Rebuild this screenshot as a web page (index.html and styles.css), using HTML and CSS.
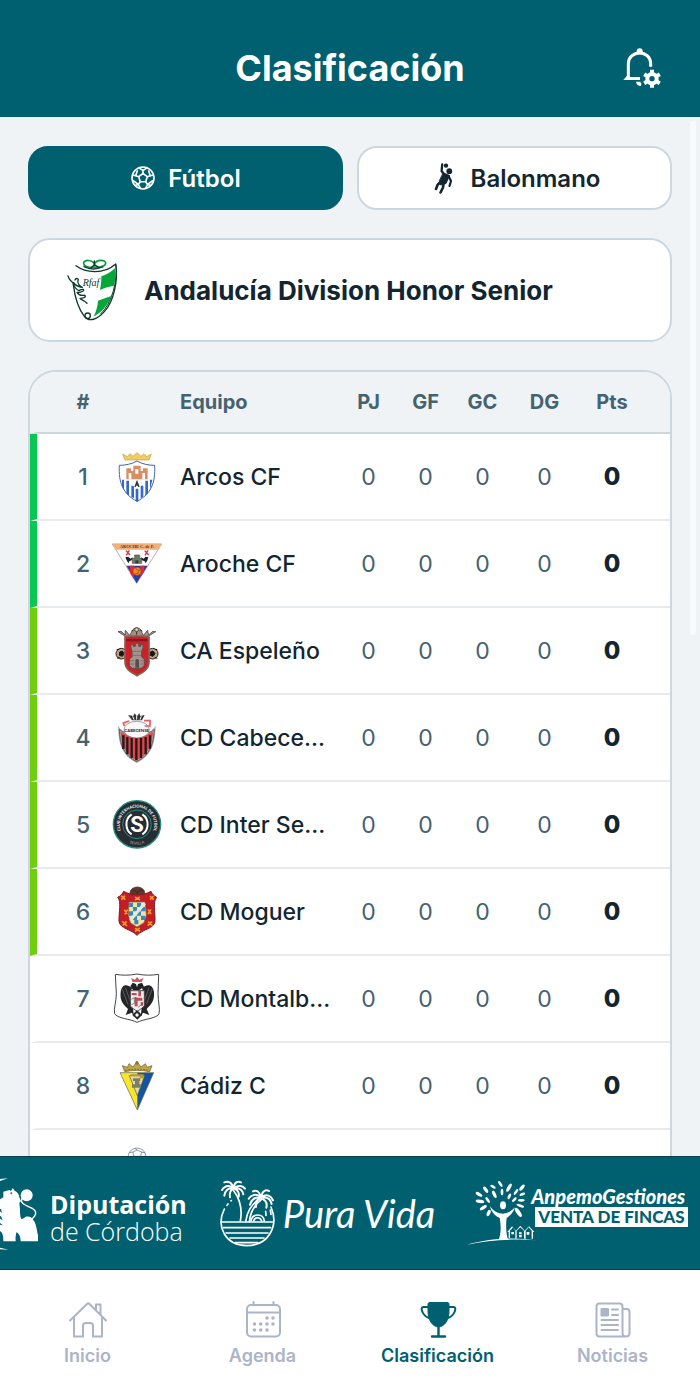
FILE: index.html
```html
<!DOCTYPE html>
<html lang="es">
<head>
  <meta charset="UTF-8">
  <title>Clasificación</title>
  <meta name="viewport" content="width=device-width, initial-scale=1.0">
  <link rel="stylesheet" href="styles.css">
</head>
<body>

<header class="topbar">
  <h1>Clasificación</h1>
  <button type="button" class="bell-btn" aria-label="Notificaciones">
    <svg viewBox="54 39 144 144" width="48" height="48" fill="none" stroke="#fff" stroke-width="9">
      <circle cx="119" cy="61" r="9" fill="#fff" stroke="none"/>
      <path d="M152 107V98c0-19-15-32-33-32s-34 13-34 32v42"/>
      <path d="M70 147l11-13h8v4h31v9z" fill="#fff" stroke="none"/>
      <path d="M108 152h12l4 5-1 8c-8 0-14-5-15-13z" fill="#fff" stroke="none"/>
      <circle cx="156" cy="143" r="14" stroke-width="12"/>
      <path d="M156 125v-9M156 161v9M171.600 134l7.800-4.500M140.400 152l-7.800 4.500M171.600 152l7.800 4.500M140.400 134l-7.800-4.500" stroke-width="12"/>
    </svg>
  </button>
</header>

<main class="content">
  <div class="tabs">
    <button type="button" class="tab active">
      <svg viewBox="0 0 26 26" width="26" height="26" fill="none" stroke="#fff" stroke-width="1.600" stroke-linejoin="round">
        <circle cx="13" cy="13" r="11"/>
        <path d="M13 8.500l4.300 3.200-1.600 5H10.300l-1.600-5z"/>
        <path d="M13 8.500V5.500M17.300 11.700l3-1M15.700 16.700l2 2.700M10.300 16.700l-2 2.700M8.700 11.700l-3-1"/>
        <path d="M9 2.800l4 2.700 4-2.700M23.700 10l-3.400.7-1.800-5.500M2.300 10l3.400.7 1.800-5.500M5 20.500l3.300-1.100L3 15.500M21 20.500l-3.300-1.100 5.300-3.900M10.500 23.500l-2.200-4M15.500 23.500l2.200-4"/>
      </svg>
      Fútbol
    </button>
    <button type="button" class="tab">
      <svg viewBox="0 0 30 32" width="30" height="32" fill="none" stroke="#122530" stroke-linecap="round" stroke-linejoin="round">
        <circle cx="17" cy="3.600" r="2.200" fill="#122530" stroke="none"/>
        <circle cx="20.300" cy="9.200" r="2.900" fill="#122530" stroke="none"/>
        <path d="M13.200 2.500l-.6 6.500 2.600 3.500" stroke-width="2.300"/>
        <path d="M14.500 11l6 2.500-3.500 8-5.500 1.500-1-4z" fill="#122530" stroke-width="1"/>
        <path d="M19.500 14l2.500 5-1.500 5" stroke-width="2.200"/>
        <path d="M12 19.500l-3.500 3.500-1.500 4" stroke-width="2.600"/>
        <path d="M14.500 21.500l-.5 4-2.500 5" stroke-width="2.600"/>
      </svg>
      Balonmano
    </button>
  </div>

  <section class="competition">
    <svg viewBox="120 84 192 192" width="64" height="64" fill="none" stroke-linecap="round" stroke-linejoin="round">
      <path d="M244 139c14-4 28-12 41-24 2 20 1 36-3 52-13 3-28 5-42 13 3-16 4-28 4-41z" fill="#06a63b"/>
      <path d="M234 212l39-14c-10 28-26 48-52 62 7-15 12-31 13-48z" fill="#06a63b"/>
      <path d="M168 107c28 21 82 28 119-5 8 48-5 111-34 143-20 23-46 33-60 14-17-22-28-52-33-95" stroke="#0c3b2c" stroke-width="4"/>
      <path d="M288 104c5 48-12 116-46 148" stroke="#0c3b2c" stroke-width="3"/>
      <path d="M223 103c-4-15-33-15-32-3 1 9 14 13 32 11 21 3 34-4 34-12 0-10-28-12-34 4z" stroke="#079b3a" stroke-width="5"/>
      <path d="M192 110c18 9 40 8 56 1M214 113l9-9 13 8M223 93v8" stroke="#0c3b2c" stroke-width="4"/>
      <path d="M144 138c5 14 13 20 20 22M165 150c3-8 13-4 9 2-4 7 7 18 13 20-10-1-20-7-28-12 4 14 10 18 18 22 10-6 18-4 12 1-8 5-11 6-18 4 5 8 9 10 18 9 8-1 10 4 3 7l-12 3c6 3 14 7 21 14" stroke="#0c3b2c" stroke-width="4"/>
      <circle cx="203" cy="257" r="8" stroke="#0c3b2c" stroke-width="4"/>
      <text x="188" y="168" class="rfaf">Rfaf</text>
    </svg>
    <h2>Andalucía Division Honor Senior</h2>
  </section>

  <div class="table-card">
    <table>
      <colgroup>
        <col class="c-pos"><col class="c-crest"><col><col class="c-num"><col class="c-num"><col class="c-num"><col class="c-dg"><col class="c-pts">
      </colgroup>
      <thead>
        <tr>
          <th>#</th><th></th><th class="team">Equipo</th><th>PJ</th><th>GF</th><th>GC</th><th>DG</th><th>Pts</th>
        </tr>
      </thead>
      <tbody>
        <tr class="promo">
          <td>1</td>
          <td>
            <svg viewBox="33 30 156 156" width="52" height="52">
              <path d="M75 57l-7-18 14 8 8-9 9 8 12-11 12 11 9-8 8 9 14-8-7 18z" fill="#f0cd63" stroke="#c99b35" stroke-width="2"/>
              <path d="M58 73c18 0 38-4 53-13 15 9 35 13 53 13 3 52-11 86-53 108-42-22-56-56-53-108z" fill="#fff" stroke="#3d66ad" stroke-width="3"/>
              <path d="M79 115V82h14v8h7V74h22v16h7v-8h14v33z" fill="#d98d62"/>
              <path d="M86 115V96h8v19M106 98V84h9v14M127 115V96h8v19" fill="#fff"/>
              <path d="M66 116h6v32l-6-14zM79 119h8v46l-8-8zM94 134h8v38l-8-4zM107 143h8v38l-4 1-4-2zM122 134h8v33l-8 5zM136 119h8v38l-8 8zM150 116h7l-7 32z" fill="#3468c8"/>
              <ellipse cx="111" cy="129" rx="11" ry="13" fill="#fff"/>
              <path d="M105 138l6-16 6 16M107 132h8" fill="none" stroke="#283c3b" stroke-width="4"/>
            </svg>
          </td>
          <td class="team">Arcos CF</td><td>0</td><td>0</td><td>0</td><td>0</td><td>0</td>
        </tr>
        <tr class="promo">
          <td>2</td>
          <td>
            <svg viewBox="33 291 156 156" width="52" height="52">
              <path d="M37 309h148l-75 118z" fill="#fff" stroke="#938a8a" stroke-width="2"/>
              <path d="M37 308h148l-11 18H48z" fill="#f4ae79"/>
              <text x="111" y="322" class="aroche">AROCHE C. de F.</text>
              <path d="M79 374h64l-33 53z" fill="#283fa8"/>
              <path d="M90 374h12v41l-12-20zM121 374h12v15l-12 20z" fill="#d82c3c"/>
              <circle cx="111" cy="391" r="12" fill="#f28b1e" stroke="#b73b28" stroke-width="2"/>
              <path d="M106 383l10 5-2 9-9 2M116 388l6-2" fill="none" stroke="#9a3723" stroke-width="2"/>
              <path d="M97 367v-15h7v-10h15v10h6v15z" fill="#6d7a66" stroke="#45503e" stroke-width="2"/>
              <path d="M106 367v-9h9v9z" fill="#333e33"/>
              <path d="M76 349l9-2 6 6 7-4-3 9-7 3-3 6-5-9zM145 349l-8-2-6 6-8-4 3 9 8 3 3 6 5-9z" fill="#1e2027"/>
              <path d="M78 329l12 13M88 328l-9 15M134 329l12 13M144 328l-9 15" stroke="#cf344e" stroke-width="4"/>
            </svg>
          </td>
          <td class="team">Aroche CF</td><td>0</td><td>0</td><td>0</td><td>0</td><td>0</td>
        </tr>
        <tr class="playoff">
          <td>3</td>
          <td>
            <svg viewBox="33 44 156 156" width="52" height="52">
              <g fill="#c99f83" stroke="#252323" stroke-width="3">
                <circle cx="64" cy="130" r="16"/><circle cx="158" cy="130" r="16"/>
              </g>
              <path d="M59 125l8-3 5 8-5 8-9-3zM151 125l8-3 6 8-6 8-9-3zM50 118l8-1M51 144l8-3M172 118l-8-1M172 144l-8-3" fill="#151719" stroke="#151719" stroke-width="3"/>
              <path d="M76 78L54 64l10-1 11 11 1-14 13 15 8-14 13-3 13 3 7 14 13-15 3 14 12-11 9 1-22 14z" fill="#a09386" stroke="#302b29" stroke-width="2"/>
              <path d="M95 63c5-8 10-10 15-10s12 3 16 10M110 53v20" fill="none" stroke="#302b29" stroke-width="3"/>
              <circle cx="110" cy="58" r="6" fill="#e4c4a6" stroke="#302b29" stroke-width="2"/>
              <path d="M75 80c24-4 47-4 72 0v74c0 20-12 29-36 42-24-13-36-22-36-42z" fill="#cf2028" stroke="#8b5d54" stroke-width="5"/>
              <path d="M79 86h64v7H79z" fill="#881820"/>
              <path d="M93 113v-10h7v5h6v-9h10v9h6v-5h7v10l-4 10v17l8 6v20l-10 8H97l-9-8v-20l8-6v-17z" fill="#a4938c" stroke="#58504e" stroke-width="3"/>
              <path d="M106 172v-21c2-7 9-7 11 0v21z" fill="#574c4b"/>
              <path d="M97 123h28M98 135h26M90 151h12M122 151h12M90 161h12M122 161h12" stroke="#6d6260" stroke-width="2"/>
            </svg>
          </td>
          <td class="team">CA Espeleño</td><td>0</td><td>0</td><td>0</td><td>0</td><td>0</td>
        </tr>
        <tr class="playoff">
          <td>4</td>
          <td>
            <svg viewBox="33 306 156 156" width="52" height="52">
              <path d="M58 358c15 20 90 20 105 0-2 48-16 79-53 97-37-18-51-49-52-97z" fill="#e64545" stroke="#aaa" stroke-width="7"/>
              <path d="M58 358c15 20 90 20 105 0-2 48-16 79-53 97-37-18-51-49-52-97z" fill="none" stroke="#4b4243" stroke-width="2"/>
              <path d="M70 376v41M82 381v52M95 383v61M109 383v68M123 383v61M137 381v52M150 376v40" stroke="#211b20" stroke-width="7"/>
              <ellipse cx="110" cy="359" rx="38" ry="25" fill="#f7f7f7" stroke="#777" stroke-width="2"/>
              <path d="M88 333l-18 6 3 9M132 332h18v16h-16" fill="none" stroke="#ef5661" stroke-width="5"/>
              <path d="M96 331L84 315l16 3 3-8 8 8 7-8 3 8 13-3-8 16z" fill="#383538"/>
              <path d="M98 319l4 10M110 316v13M124 319l-4 10" stroke="#fff" stroke-width="3"/>
              <text x="110" y="366" class="cabecense">CABECENSE</text>
            </svg>
          </td>
          <td class="team">CD Cabece...</td><td>0</td><td>0</td><td>0</td><td>0</td><td>0</td>
        </tr>
        <tr class="playoff">
          <td>5</td>
          <td>
            <svg viewBox="33 42 156 156" width="52" height="52">
              <circle cx="111" cy="118" r="71" fill="#282c33" stroke="#278e7d" stroke-width="4"/>
              <circle cx="111" cy="118" r="43" fill="#282c33" stroke="#278e7d" stroke-width="3"/>
              <path d="M95 88c-21 13-21 47 0 60M127 88c21 13 21 47 0 60" fill="none" stroke="#fff" stroke-width="6"/>
              <path id="ring-top" d="M65.400 144.300A52 52 0 1 1 156.600 144.300" fill="none"/>
              <path id="ring-bottom" d="M58 150A63 63 0 0 0 164 150" fill="none"/>
              <text class="inter-ring"><textPath href="#ring-top" startOffset="50%">CLUB INTERNACIONAL DE FUTBOL</textPath></text>
              <text class="inter-ring muted"><textPath href="#ring-bottom" startOffset="50%">SEVILLA</textPath></text>
              <text x="111" y="142" class="inter-s">S</text>
            </svg>
          </td>
          <td class="team">CD Inter Se...</td><td>0</td><td>0</td><td>0</td><td>0</td><td>0</td>
        </tr>
        <tr class="playoff">
          <td>6</td>
          <td>
            <svg viewBox="33 304 156 156" width="52" height="52">
              <ellipse cx="112" cy="324" rx="22" ry="17" fill="#5c382a" stroke="#2c2422" stroke-width="2"/>
              <path d="M98 316l14 7 15-8M112 322v10" fill="none" stroke="#2c2422" stroke-width="2"/>
              <path d="M53 338c8-4 14-9 18-18 23 14 57 14 82 0 4 9 9 14 17 18-12 13-4 44-5 72-2 22-38 24-54 42-16-18-52-20-54-42-1-28 8-59-4-72z" fill="#c31d27" stroke="#7d1c22" stroke-width="3"/>
              <path d="M87 352h48l4 39-7 23-21 13-20-13-6-23z" fill="#eee7a3" stroke="#85664a" stroke-width="2"/>
              <path d="M87 354h12v13H87zM111 354h12v13h-12zM99 367h12v13H99zM123 367h13v13h-13zM87 380h12v13H87zM111 380h12v13h-12zM99 393h12v13H99zM123 393h12v13h-12zM103 406h12v13h-12z" fill="#3b87bd"/>
              <path d="M91 407l43-51" stroke="#e6e9e2" stroke-width="9"/>
              <path d="M63 333l13 12M75 333l-11 12M150 334l11 11M161 334l-11 11M105 338l15 8M119 337l-14 9M73 375l9 13M83 375l-9 14M144 374l9 14M153 374l-9 14M67 410l14 14M80 410l-12 13M144 411l13 12M156 411l-13 12M105 431l15 9M119 430l-14 11" stroke="#f19a2c" stroke-width="5"/>
            </svg>
          </td>
          <td class="team">CD Moguer</td><td>0</td><td>0</td><td>0</td><td>0</td><td>0</td>
        </tr>
        <tr>
          <td>7</td>
          <td>
            <svg viewBox="33 42 156 156" width="52" height="52">
              <path d="M46 46c18 3 43 4 65-1 24 5 45 4 65 1l-2 58c0 25 7 46 3 60-4 14-47 16-66 26-18-10-61-12-67-26-4-14 5-35 5-60z" fill="#fff" stroke="#454545" stroke-width="3"/>
              <path d="M96 87C77 71 64 79 62 100c-3 26 8 37 22 50l-7 18 19-7 6 13-9-76M126 87c19-16 34-8 36 13 2 26-9 37-22 50l8 18-19-7-7 13 8-76" fill="#242529"/>
              <path d="M67 91l17 45M76 86l15 40M156 91l-17 45M147 86l-14 40" stroke="#777" stroke-width="2"/>
              <path d="M91 82l7-11 10 4 3 10 3-10 12-4 6 12-14 10H99z" fill="#202126"/>
              <path d="M98 69l-5-12 12 5 6-8 7 8 13-5-6 12z" fill="#c85b5e"/>
              <path d="M91 95h42v46c-9 9-15 11-21 17-7-6-13-8-21-17z" fill="#f2eeee" stroke="#4b4345" stroke-width="3"/>
              <path d="M95 102h15v7H95zM115 96h8v16h-8zM104 113v29h9v-17h14v-9h-13zM122 129h7v11h-7z" fill="#b95059"/>
              <path d="M94 121l9-5v17l-9 4M114 145l16-12" fill="none" stroke="#555" stroke-width="2"/>
              <path d="M111 153l15 15-14 14-15-14z" fill="#25252a"/>
              <circle cx="111" cy="168" r="5" fill="#fff"/>
            </svg>
          </td>
          <td class="team">CD Montalb...</td><td>0</td><td>0</td><td>0</td><td>0</td><td>0</td>
        </tr>
        <tr>
          <td>8</td>
          <td>
            <svg viewBox="33 303 156 156" width="52" height="52">
              <path d="M60 341h52v112z" fill="#f9e62c"/>
              <path d="M112 341h49l-49 112z" fill="#1454a0"/>
              <path d="M60 341h101l-49 112z" fill="none" stroke="#5b604d" stroke-width="2"/>
              <path d="M88 350h46l-22 60z" fill="#e6d9a1" stroke="#55543b" stroke-width="2"/>
              <path d="M99 358h22v8H99zM96 376h27v10H96zM105 366h13v11h-13z" fill="#7c8063"/>
              <path d="M92 346h39v12h-12v-6H92z" fill="#b9982b"/>
              <path d="M74 338l-7-18 15 5 5-11 12 10 12-17 12 17 13-10 5 11 15-5-7 18c-25-5-50-5-75 0z" fill="#c3a648" stroke="#69572b" stroke-width="2"/>
              <path d="M76 334c25-5 48-5 71 0" fill="none" stroke="#7c672d" stroke-width="3" stroke-dasharray="5 4"/>
              <circle cx="111" cy="312" r="5" fill="#8b7435"/>
            </svg>
          </td>
          <td class="team">Cádiz C</td><td>0</td><td>0</td><td>0</td><td>0</td><td>0</td>
        </tr>
        <tr>
          <td></td>
          <td>
            <svg viewBox="33 565 156 156" width="52" height="52" fill="none" stroke="#5a6688" stroke-width="2">
              <circle cx="111" cy="595" r="27" fill="#fff"/>
              <path d="M99 580l12-6 14 6-3 13H101zM99 580l-11 2M125 580l11 3M111 574l-6-5M101 593l-8 9M122 593l8 9"/>
            </svg>
          </td>
          <td class="team"></td><td></td><td></td><td></td><td></td><td></td>
        </tr>
      </tbody>
    </table>
  </div>
  <span class="scroll-thumb"></span>
</main>

<section class="sponsors">
  <a href="#" class="sponsor diputacion">
    <svg viewBox="0 75 120 225" width="40" height="75" fill="#fff">
      <path d="M0 84l24-2L0 90zM0 290l26 6-26-1z"/>
      <path d="M0 145l10-6V122l18-5 5 3 5-9 6 8c9 5 13 11 14 20l5 12-5 4 2 20c0 13 0 21 4 29l8-2c4-9 24-6 26 3 12 13 12 33 16 48v18H62c0-14-4-22-12-28-3 8-4 14-3 28H10c0-18-2-25-10-31v-19l9 2-9-7v-13l8 5-5-12-3-1v-14l6 5-3-12H0z"/>
      <circle cx="80" cy="133" r="18"/>
      <path d="M66 142c-9 17 18 23 32 31 20 12 2 32-13 35" fill="none" stroke="#fff" stroke-width="4"/>
      <circle cx="34" cy="127" r="3" fill="#8d3f50"/>
    </svg>
    <span class="dip-text">
      <strong>Diputación</strong>
      <span>de Córdoba</span>
    </span>
  </a>
  <a href="#" class="sponsor puravida">
    <svg viewBox="651 81 174 210" width="58" height="70" fill="none" stroke="#fff" stroke-width="5" stroke-linecap="round">
      <path d="M667 174c-26 53 3 110 67 110s98-57 73-116"/>
      <path d="M660 213h152M664 230h142M672 246h126M684 261h102M700 275h68"/>
      <path d="M693 116c20 26 29 57 22 94M771 143c-23 20-36 38-40 69M778 146c-22 17-33 38-36 66"/>
      <path d="M747 210c4-24 37-24 40 0M755 210c3-13 20-13 24 0"/>
      <path d="M694 112c-4-20-16-22-27-18M694 110c-15-9-27-4-34 7M693 111c-17-1-24 11-26 23M695 112c-12 6-13 17-11 27M696 111c0-17 11-22 21-17M697 111c14-11 26-6 32 2M697 112c18-3 26 8 27 18M697 113c12 5 15 15 13 24" stroke-width="6"/>
      <path d="M777 139c-4-18-14-23-24-18M777 139c-14-13-30-7-37 4M776 140c-18-3-29 8-32 21M777 141c-13 5-17 16-15 27M778 138c2-19 14-23 23-18M779 139c15-13 29-4 34 9M779 140c19-4 28 7 30 19M779 142c13 6 17 17 14 28" stroke-width="6"/>
      <path d="M675 163l3-4M687 149h1M791 181l1 12M805 177l2 13"/>
    </svg>
    <span class="vida-text">Pura Vida</span>
  </a>
  <a href="#" class="sponsor anpemo">
    <svg viewBox="343 96 192 204" width="64" height="68" fill="#fff">
      <ellipse cx="451" cy="175" rx="9" ry="12"/>
      <path d="M412 178c13 18 25 21 39 22 14-1 23-5 35-19-3 17-15 25-24 32-3 23-2 43 4 66h-28c8-22 7-45 3-66-15-7-25-18-29-35z"/>
      <path d="M343 293c61-17 132-25 213-12-79-7-144-2-213 12z"/>
      <path d="M468 273v-18h-4l14-17 12 13 13-15 13 15 13-13 16 17h-4v20h-4v-24l-9-10-9 10v24h-5v-24l-11-10-11 10v24h-4v-24l-7-10-9 10v22z"/>
      <path d="M476 255h8v7h-8zM499 256h8v6h-8zM499 264h8v7h-8zM522 255h8v8h-8z"/>
      <g>
        <ellipse cx="379" cy="142" rx="11" ry="5" transform="rotate(30 379 142)"/>
        <ellipse cx="382" cy="163" rx="13" ry="5" transform="rotate(8 382 163)"/>
        <ellipse cx="392" cy="182" rx="12" ry="5" transform="rotate(-32 392 182)"/>
        <ellipse cx="399" cy="128" rx="11" ry="5" transform="rotate(55 399 128)"/>
        <ellipse cx="405" cy="159" rx="10" ry="4" transform="rotate(55 405 159)"/>
        <ellipse cx="408" cy="198" rx="10" ry="5" transform="rotate(-65 408 198)"/>
        <ellipse cx="421" cy="119" rx="9" ry="4" transform="rotate(30 421 119)"/>
        <ellipse cx="425" cy="142" rx="12" ry="5" transform="rotate(65 425 142)"/>
        <ellipse cx="443" cy="111" rx="10" ry="4" transform="rotate(55 443 111)"/>
        <ellipse cx="448" cy="135" rx="10" ry="4" transform="rotate(90 448 135)"/>
        <ellipse cx="469" cy="122" rx="14" ry="5" transform="rotate(-60 469 122)"/>
        <ellipse cx="470" cy="148" rx="9" ry="4" transform="rotate(-65 470 148)"/>
        <ellipse cx="490" cy="135" rx="10" ry="4" transform="rotate(-55 490 135)"/>
        <ellipse cx="508" cy="122" rx="11" ry="5" transform="rotate(-50 508 122)"/>
        <ellipse cx="509" cy="142" rx="9" ry="4" transform="rotate(-20 509 142)"/>
        <ellipse cx="485" cy="158" rx="9" ry="4" transform="rotate(-45 485 158)"/>
        <ellipse cx="506" cy="160" rx="10" ry="4"/>
        <ellipse cx="503" cy="176" rx="12" ry="4" transform="rotate(20 503 176)"/>
        <ellipse cx="497" cy="196" rx="16" ry="6" transform="rotate(55 497 196)"/>
      </g>
    </svg>
    <span class="anpemo-text">
      <em>AnpemoGestiones</em>
      <strong>VENTA DE FINCAS</strong>
    </span>
  </a>
</section>

<nav class="bottom-nav">
  <a href="#">
    <svg viewBox="0 0 40 40" width="40" height="40" fill="none" stroke="currentColor" stroke-width="2" stroke-linecap="round" stroke-linejoin="round">
      <path d="M6 18v18.500h9V26c0-2 1-3 3-3h4c2 0 3 1 3 3v10.500h9V18"/>
      <path d="M2 20.500L19 4c1-1 1.500-1 2.500 0L38 20.500M28 9.500V4.500h4.500V14"/>
    </svg>
    Inicio
  </a>
  <a href="#">
    <svg viewBox="0 0 40 40" width="40" height="40" fill="none" stroke="currentColor" stroke-width="2" stroke-linecap="round">
      <rect x="4" y="5" width="33" height="31.500" rx="4"/>
      <path d="M4 12.500h33M10.500 2v3M30.500 2v3"/>
      <path d="M24 18h.01M30 18h.01M11.500 24h.01M17.700 24h.01M24 24h.01M30 24h.01M11.500 30h.01M17.700 30h.01M24 30h.01" stroke-width="3.600"/>
    </svg>
    Agenda
  </a>
  <a href="#" class="active">
    <svg viewBox="0 0 40 40" width="40" height="40" fill="none" stroke="currentColor" stroke-width="2" stroke-linecap="round" stroke-linejoin="round">
      <path d="M10 4.500c0-1.500.5-2 2-2h17c1.500 0 2 .5 2 2v7c0 8-4 15-10.500 15.500C14 26.500 10 19.500 10 11.500z" fill="currentColor" stroke-width="1"/>
      <path d="M10 7H5.500C3 7 3.500 10 4.500 12c1.200 3 3.500 5 6.500 6M31 7h4.500c2.500 0 2 3 1 5-1.200 3-3.500 5-6.500 6"/>
      <path d="M20.500 27v9M14 36.500h13" stroke-width="2.400"/>
    </svg>
    Clasificación
  </a>
  <a href="#">
    <svg viewBox="0 0 40 40" width="40" height="40" fill="none" stroke="currentColor" stroke-width="2" stroke-linecap="round" stroke-linejoin="round">
      <path d="M33 36.500H6.500c-2 0-3-1-3-3v-27c0-2 1-3 3-3h20c2 0 3 1 3 3V33c0 2 1.500 3.500 3.500 3.500s3.500-1.500 3.500-3.500V12c0-2-1-3-3-3h-4"/>
      <rect x="8.500" y="9" width="6.500" height="6.500" fill="currentColor"/>
      <path d="M19 9.500h6M19 15h6M8.500 20h16.500M8.500 25h16.500M8.500 30h16.500"/>
    </svg>
    Noticias
  </a>
</nav>

</body>
</html>
```
FILE: styles.css
```css
* {
  box-sizing: border-box;
}

body {
  margin: 0;
  height: 100vh;
  display: flex;
  flex-direction: column;
  background: #f0f3f5;
  color: #122530;
  font-family: Inter, sans-serif;
}

svg {
  flex: none;
  overflow: visible;
}

a {
  color: inherit;
  text-decoration: none;
}

/* Header */
.topbar {
  display: grid;
  grid-template-columns: 1fr auto 1fr;
  align-items: center;
  padding: 44px 34px 25px;
  background: #006070;
  color: #fff;
}

.topbar h1 {
  grid-column: 2;
  margin: 0;
  font-size: 36px;
  line-height: 48px;
  font-weight: 700;
}

.bell-btn {
  justify-self: end;
  display: flex;
  padding: 0;
  border: none;
  background: none;
  cursor: pointer;
}

/* Content */
.content {
  flex: 1;
  min-height: 0;
  position: relative;
  overflow: hidden;
  padding: 29px 28px 0;
}

.tabs {
  display: flex;
  gap: 14px;
}

.tab {
  flex: 1;
  display: flex;
  align-items: center;
  justify-content: center;
  gap: 12px;
  height: 64px;
  border: 2px solid #ccd7df;
  border-radius: 20px;
  background: #fff;
  color: #122530;
  font-family: inherit;
  font-size: 24px;
  font-weight: 600;
  cursor: pointer;
}

.tab.active {
  background: #006070;
  border-color: #006070;
  color: #fff;
}

.competition {
  display: flex;
  align-items: center;
  gap: 20px;
  margin-top: 28px;
  padding: 18px 30px;
  border: 2px solid #ccd7df;
  border-radius: 22px;
  background: #fff;
}

.competition h2 {
  margin: 0;
  font-size: 26px;
  font-weight: 700;
}

.rfaf {
  font: italic 30px "Liberation Serif", serif;
  fill: #0c3b2c;
}

/* Standings */
.table-card {
  margin-top: 28px;
  border: 2px solid #ccd7df;
  border-radius: 28px;
  background: #fff;
  overflow: hidden;
}

table {
  width: 100%;
  table-layout: fixed;
  border-collapse: separate;
  border-spacing: 0;
}

.c-pos { width: 81px; }
.c-crest { width: 52px; }
.c-num { width: 57px; }
.c-dg { width: 67px; }
.c-pts { width: 92px; }

th {
  height: 62px;
  padding: 0;
  background: #f0f3f5;
  border-bottom: 2px solid #ccd7df;
  color: #456270;
  font-size: 20px;
  font-weight: 700;
}

td {
  height: 87px;
  padding: 0;
  border-bottom: 2px solid #e8ebee;
  color: #456270;
  font-size: 23px;
  text-align: center;
}

td svg {
  display: block;
}

th:first-child,
td:first-child {
  padding-left: 18px;
  border-left: 7px solid transparent;
}

td:first-child {
  font-weight: 500;
}

th.team,
td.team {
  padding-left: 17px;
  text-align: left;
}

td.team {
  color: #122530;
  font-weight: 500;
  white-space: nowrap;
}

th:last-child,
td:last-child {
  padding-right: 24px;
}

td:last-child {
  color: #122530;
  font-size: 24px;
  font-weight: 800;
}

.promo td:first-child { border-left-color: #08c853; }
.playoff td:first-child { border-left-color: #6fce0e; }

.aroche {
  font: bold 13px "Liberation Serif", serif;
  fill: #4d3428;
  text-anchor: middle;
}

.cabecense {
  font: bold 13px Lato, sans-serif;
  fill: #242226;
  text-anchor: middle;
}

.inter-ring {
  font: bold 12px Lato, sans-serif;
  fill: #fff;
  text-anchor: middle;
}

.inter-ring.muted {
  fill: #8d9297;
}

.inter-s {
  font: bold 66px Roboto, sans-serif;
  fill: #fff;
  text-anchor: middle;
}

.scroll-thumb {
  position: absolute;
  top: 4px;
  right: 4px;
  width: 6px;
  height: 514px;
  border-radius: 3px;
  background: #f8fafb;
}

/* Sponsors */
.sponsors {
  display: flex;
  align-items: center;
  gap: 32px;
  height: 114px;
  overflow: hidden;
  background: #006070;
  border-top: 1px solid #07404d;
  border-bottom: 1px solid #07404d;
  color: #fff;
}

.sponsor {
  display: flex;
  align-items: center;
  flex: none;
  white-space: nowrap;
}

.diputacion {
  gap: 10px;
}

.dip-text {
  display: flex;
  flex-direction: column;
  padding-top: 10px;
  font-family: "Open Sans", sans-serif;
  font-size: 25px;
  line-height: 27px;
  font-weight: 300;
}

.dip-text strong {
  font-weight: 700;
}

.puravida {
  gap: 6px;
}

.vida-text {
  font-family: Lato, sans-serif;
  font-size: 38px;
  font-style: italic;
  font-weight: 400;
}

.anpemo-text {
  display: flex;
  flex-direction: column;
  align-items: flex-start;
  padding-bottom: 14px;
}

.anpemo-text em {
  font-family: Lato, sans-serif;
  font-size: 20px;
  line-height: 22px;
  font-weight: 900;
}

.anpemo-text strong {
  margin-left: 4px;
  padding: 0 3px;
  background: #fff;
  color: #006070;
  font-family: Lato, sans-serif;
  font-size: 17px;
  line-height: 20px;
  font-weight: 900;
}

/* Bottom navigation */
.bottom-nav {
  display: grid;
  grid-template-columns: repeat(4, 1fr);
  height: 125px;
  padding-top: 30px;
  background: #fff;
}

.bottom-nav a {
  display: flex;
  flex-direction: column;
  align-items: center;
  gap: 4px;
  color: #abb4c9;
  font-size: 18px;
  line-height: 24px;
  font-weight: 600;
}

.bottom-nav a.active {
  color: #006070;
}
```
